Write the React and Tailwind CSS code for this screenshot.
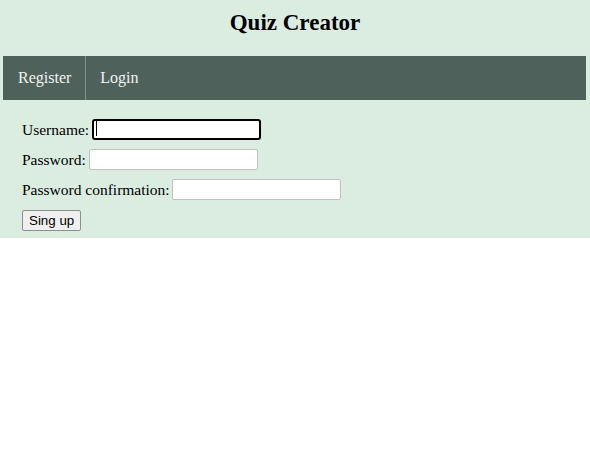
export default function App() {
  return (
    <div className="bg-[#dbece1] pb-[7px] font-['Liberation_Serif',serif] text-black">
      <h1 className="text-center text-[23px] font-bold leading-[28px] pt-[9px] pb-[19px]">Quiz Creator</h1>

      <nav className="flex h-[44px] mx-[3px] mr-[4px] bg-[#4e625b] text-[#f2f2f2] text-[16px]">
        <a className="flex items-center pl-[15px] pr-[14px] border-r border-[#7e918a]">Register</a>
        <a className="flex items-center px-[14px]">Login</a>
      </nav>

      <form className="flex flex-col gap-[9px] pt-[19px] pl-[22px] text-[15.5px]">
        <div className="flex items-center h-[21px]">
          <label className="mr-[3px]">Username:</label>
          <div className="relative">
            <input className="w-[169px] h-[21px] border-2 border-black rounded-[3px] bg-white outline-none" />
            <span className="absolute left-[4px] top-[3px] w-px h-[15px] bg-black" />
          </div>
        </div>
        <div className="flex items-center h-[21px]">
          <label className="mr-[3px]">Password:</label>
          <input type="password" className="w-[169px] h-[21px] border border-[#c2c2c2] rounded-[2px] bg-white outline-none" />
        </div>
        <div className="flex items-center h-[21px]">
          <label className="mr-[2px]">Password confirmation:</label>
          <input type="password" className="w-[169px] h-[21px] border border-[#c2c2c2] rounded-[2px] bg-white outline-none" />
        </div>
        <div className="flex items-center h-[22px]">
          <button type="button" className="h-[21px] px-[6px] border border-[#8f8f8f] rounded-[2px] bg-[#efefef] font-['Liberation_Sans',sans-serif] text-[13.33px]">Sing up</button>
        </div>
      </form>
    </div>
  )
}
